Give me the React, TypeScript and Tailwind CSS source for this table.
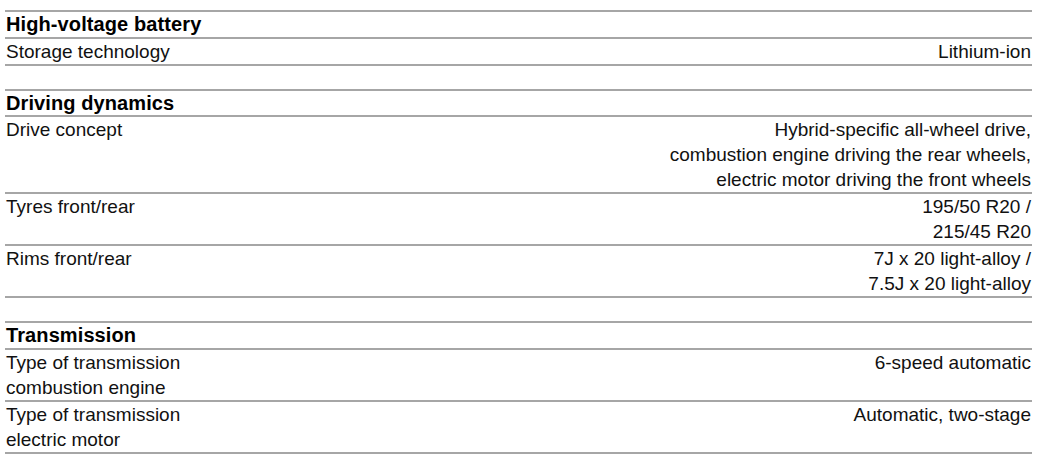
import React from 'react';

type Row = { label: string[]; value: string[] };
type Section = { title: string; rows: Row[] };

const sections: Section[] = [
  {
    title: 'High-voltage battery',
    rows: [{ label: ['Storage technology'], value: ['Lithium-ion'] }],
  },
  {
    title: 'Driving dynamics',
    rows: [
      {
        label: ['Drive concept'],
        value: [
          'Hybrid-specific all-wheel drive,',
          'combustion engine driving the rear wheels,',
          'electric motor driving the front wheels',
        ],
      },
      { label: ['Tyres front/rear'], value: ['195/50 R20 /', '215/45 R20'] },
      { label: ['Rims front/rear'], value: ['7J x 20 light-alloy /', '7.5J x 20 light-alloy'] },
    ],
  },
  {
    title: 'Transmission',
    rows: [
      { label: ['Type of transmission', 'combustion engine'], value: ['6-speed automatic'] },
      { label: ['Type of transmission', 'electric motor'], value: ['Automatic, two-stage'] },
    ],
  },
];

const App = () => {
  return (
    <div className="w-[1043px] h-[460px] bg-white overflow-hidden pt-[10px] pl-[5px] pr-[11px] font-['Liberation_Sans',Arial,sans-serif] text-[19px] text-[#111]">
      <div className="flex flex-col gap-[23px]">
        {sections.map((section) => (
          <div key={section.title} className="border-t-2 border-[#a6a6a6]">
            <div className="border-b-2 border-[#a6a6a6] pl-[1px] text-[20px] font-bold leading-[24.5px] tracking-[0.1px] text-black">
              {section.title}
            </div>
            {section.rows.map((row, i) => (
              <div key={i} className="flex border-b-2 border-[#a6a6a6] leading-[25px]">
                <div className="w-[282px] pl-[1px]">
                  {row.label.map((l) => (
                    <div key={l}>{l}</div>
                  ))}
                </div>
                <div className="flex-1 text-right pr-[1px]">
                  {row.value.map((v) => (
                    <div key={v}>{v}</div>
                  ))}
                </div>
              </div>
            ))}
          </div>
        ))}
      </div>
    </div>
  );
};

export default App;
